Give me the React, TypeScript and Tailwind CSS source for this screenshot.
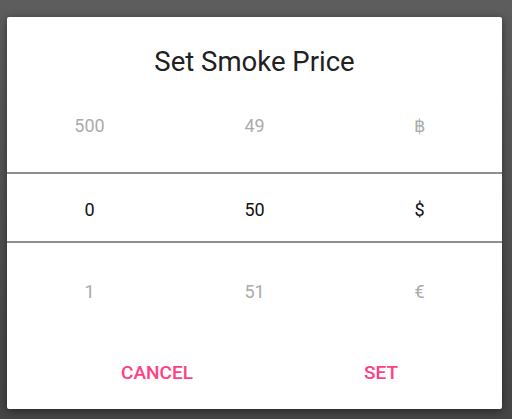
const columns = [
  { top: '500', mid: '0', bottom: '1' },
  { top: '49', mid: '50', bottom: '51' },
  { top: '฿', mid: '$', bottom: '€' },
];

export default function App() {
  return (
    <div
      className="w-[512px] h-[419px] bg-gradient-to-b from-[#5d5d5d] to-[#454545] pt-[17px] pl-[7px]"
      style={{ fontFamily: 'Roboto, "Noto Sans", sans-serif' }}
    >
      <div className="w-[495px] h-[392px] bg-white rounded-[2px] shadow-[0_2px_8px_rgba(0,0,0,0.45)]">
        {/* Title */}
        <div className="pt-[31px] text-center text-[27.5px] leading-[28px] text-[#212121]">
          Set Smoke Price
        </div>

        {/* Picker */}
        <div className="grid grid-cols-3 mt-[38px] h-[24px] text-[18px] leading-[24px] text-[#ababab] text-center">
          {columns.map((c) => (
            <div key={c.top}>{c.top}</div>
          ))}
        </div>
        <div className="mt-[34px] h-[2px] bg-[#8f8f8f]" />
        <div className="grid grid-cols-3 h-[67px] pt-[4px] items-center text-[18px] leading-[24px] text-[#111] text-center">
          {columns.map((c) => (
            <div key={c.mid}>{c.mid}</div>
          ))}
        </div>
        <div className="h-[2px] bg-[#8f8f8f]" />
        <div className="grid grid-cols-3 mt-[37px] h-[24px] text-[18px] leading-[24px] text-[#ababab] text-center">
          {columns.map((c) => (
            <div key={c.bottom}>{c.bottom}</div>
          ))}
        </div>

        {/* Actions */}
        <div className="flex mt-[57px] pl-[90px] text-[19px] leading-[24px] font-medium text-[#ff4081]">
          <div className="w-[120px] text-center">CANCEL</div>
          <div className="w-[120px] ml-[104px] text-center">SET</div>
        </div>
      </div>
    </div>
  );
}
